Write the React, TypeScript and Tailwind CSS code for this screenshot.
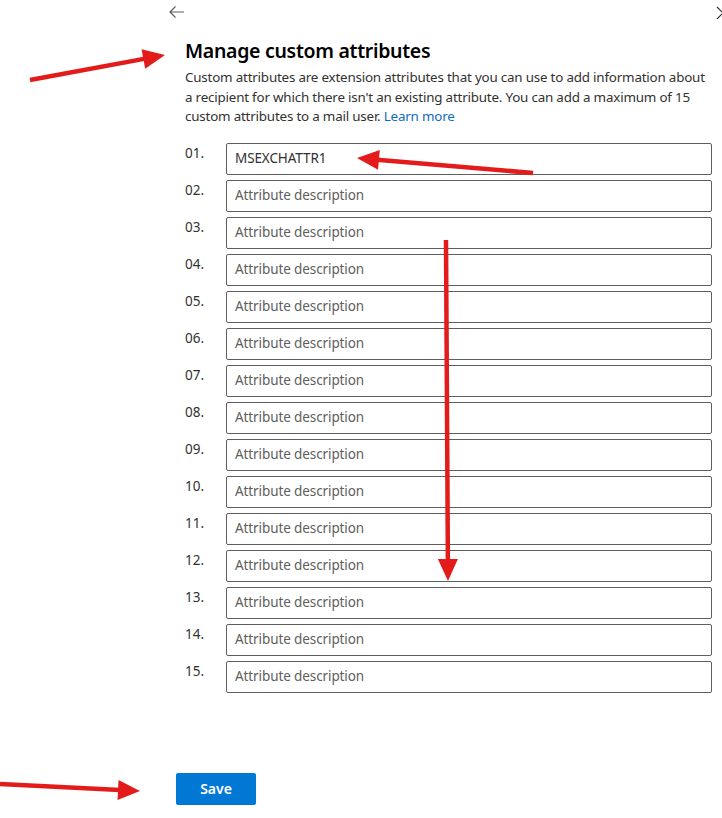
const rows = Array.from({ length: 15 }, (_, i) => ({
  label: String(i + 1).padStart(2, "0") + ".",
  value: i === 0 ? "MSEXCHATTR1" : "",
}));

function Arrow({ x1, y1, x2, y2 }: { x1: number; y1: number; x2: number; y2: number }) {
  const dx = x2 - x1;
  const dy = y2 - y1;
  const len = Math.hypot(dx, dy);
  const ux = dx / len;
  const uy = dy / len;
  const hl = 22;
  const hw = 10;
  const bx = x2 - ux * hl;
  const by = y2 - uy * hl;
  const pts = `${x2},${y2} ${bx - uy * hw},${by + ux * hw} ${bx + uy * hw},${by - ux * hw}`;
  return (
    <g>
      <line x1={x1} y1={y1} x2={bx + ux * 2} y2={by + uy * 2} stroke="#e31b1b" strokeWidth="4.5" />
      <polygon points={pts} fill="#e31b1b" />
    </g>
  );
}

export default function App() {
  return (
    <div
      className="relative w-[722px] h-[818px] bg-white overflow-hidden text-[#323130]"
      style={{ fontFamily: '"Segoe UI", "Noto Sans", "Open Sans", sans-serif' }}
    >
      <div className="flex items-center justify-between h-6 pl-[168px] pr-0 pt-0">
        <svg width="17" height="14" viewBox="0 0 17 14" fill="none" stroke="#605e5c" strokeWidth="1.2">
          <path d="M16 7H2M7.5 1.5L2 7l5.5 5.5" />
        </svg>
        <svg width="10" height="14" viewBox="0 0 10 14" fill="none" stroke="#323130" strokeWidth="1.2" className="mr-[-2px]">
          <path d="M3 2l6 6M3 14l6-6" />
        </svg>
      </div>

      <div className="pl-[185px] pr-[10px] pt-[13px]">
        <h1 className="text-[19.5px] font-semibold text-black leading-7 tracking-[-0.3px]">Manage custom attributes</h1>
        <p className="text-[13.4px] leading-[19.5px] mt-[3px] whitespace-nowrap tracking-[-0.2px]">
          Custom attributes are extension attributes that you can use to add information about
          <br />
          a recipient for which there isn't an existing attribute. You can add a maximum of 15
          <br />
          custom attributes to a mail user. <a className="text-[#0f6cbd]" href="#">Learn more</a>
        </p>

        <div className="mt-[16px] flex flex-col gap-[5px]">
          {rows.map((r) => (
            <div key={r.label} className="flex items-start">
              <span className="w-[41px] text-[13.5px] leading-5 pt-0 text-[#323130]">{r.label}</span>
              <div className="flex-1 h-[32px] border border-[#605e5c] rounded-[2px] flex items-center px-[8px] text-[13.5px] tracking-[-0.1px]">
                {r.value ? (
                  <span className="text-[#323130]">{r.value}</span>
                ) : (
                  <span className="text-[#605e5c]">Attribute description</span>
                )}
              </div>
            </div>
          ))}
        </div>
      </div>

      <div className="pl-[176px] mt-[80px]">
        <button className="w-[80px] h-[32px] bg-[#0078d4] text-white text-[14px] font-semibold rounded-[2px]">
          Save
        </button>
      </div>

      <svg className="absolute inset-0 pointer-events-none" width="722" height="818">
        <Arrow x1={30} y1={80} x2={165} y2={55} />
        <Arrow x1={533} y1={173} x2={357} y2={158} />
        <Arrow x1={446} y1={240} x2={448} y2={581} />
        <Arrow x1={0} y1={784} x2={140} y2={791} />
      </svg>
    </div>
  );
}
